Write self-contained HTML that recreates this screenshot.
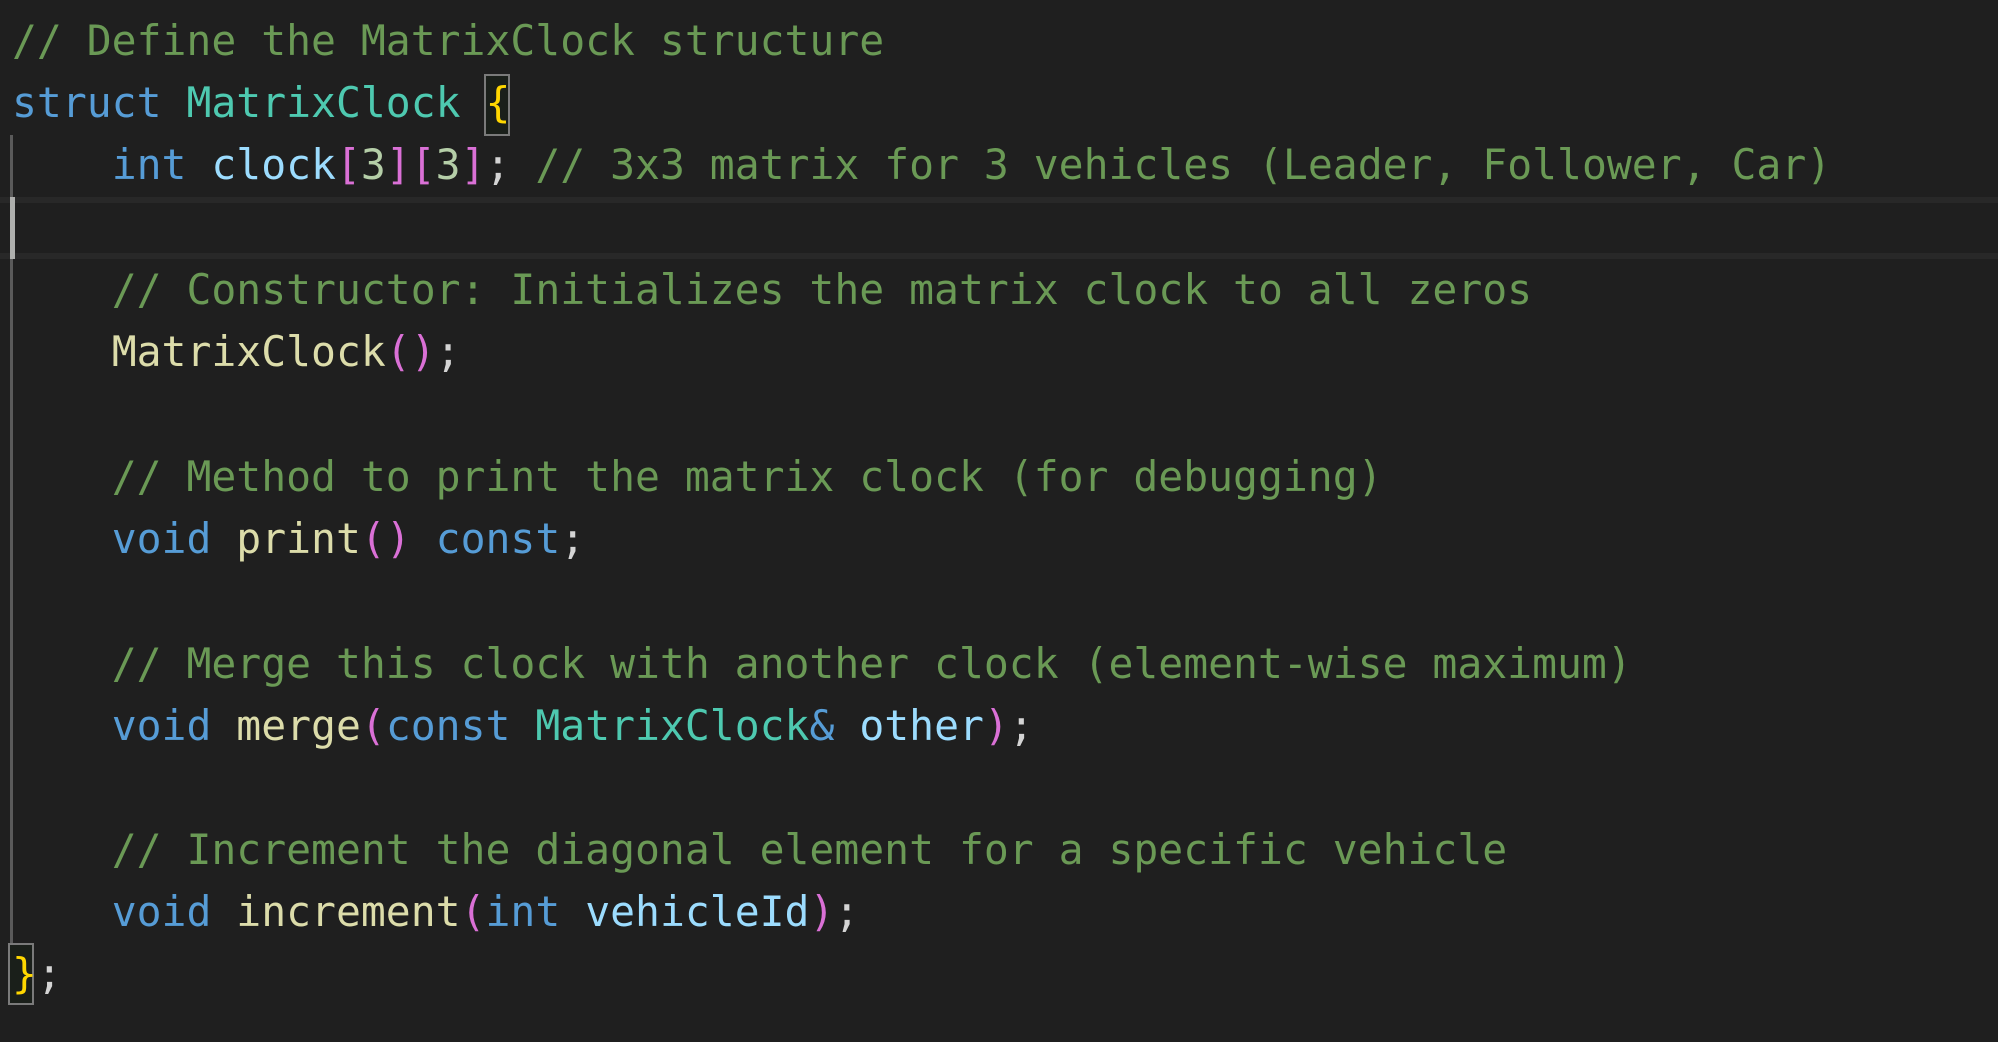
<!DOCTYPE html>
<html><head><meta charset="utf-8"><style>
html,body{margin:0;padding:0;background:#1f1f1f;width:1998px;height:1042px;overflow:hidden}
.l{position:absolute;left:12px;height:62px;line-height:62px;font-family:"DejaVu Sans Mono","Liberation Mono",monospace;font-size:41.4px;white-space:pre;color:#d4d4d4;margin-top:0px}
.c{color:#6a9955}.k{color:#569cd6}.t{color:#4ec9b0}.f{color:#dcdcaa}.v{color:#9cdcfe}.n{color:#b5cea8}.p{color:#da70d6}.b{color:#ffd700}
</style></head><body>
<div style="position:absolute;left:0;top:197px;width:1998px;height:6px;background:#282828"></div>
<div style="position:absolute;left:0;top:253px;width:1998px;height:6px;background:#282828"></div>
<div style="position:absolute;left:10px;top:135px;width:3px;height:808px;background:#5a5a5a"></div>
<div style="position:absolute;left:10px;top:197px;width:5px;height:62px;background:#aeafad"></div>
<div style="position:absolute;left:484px;top:74px;width:22px;height:58px;border:2px solid #7a7a7a;background:#1a1f1a"></div>
<div style="position:absolute;left:8px;top:943px;width:22px;height:58px;border:2px solid #7a7a7a;background:#1a1f1a"></div>
<div class="l" style="top:10px"><span class="c">// Define the MatrixClock structure</span></div>
<div class="l" style="top:72px"><span class="k">struct</span> <span class="t">MatrixClock</span> <span class="b">{</span></div>
<div class="l" style="top:134px">    <span class="k">int</span> <span class="v">clock</span><span class="p">[</span><span class="n">3</span><span class="p">][</span><span class="n">3</span><span class="p">]</span>; <span class="c">// 3x3 matrix for 3 vehicles (Leader, Follower, Car)</span></div>
<div class="l" style="top:259px">    <span class="c">// Constructor: Initializes the matrix clock to all zeros</span></div>
<div class="l" style="top:321px">    <span class="f">MatrixClock</span><span class="p">()</span>;</div>
<div class="l" style="top:446px">    <span class="c">// Method to print the matrix clock (for debugging)</span></div>
<div class="l" style="top:508px">    <span class="k">void</span> <span class="f">print</span><span class="p">()</span> <span class="k">const</span>;</div>
<div class="l" style="top:633px">    <span class="c">// Merge this clock with another clock (element-wise maximum)</span></div>
<div class="l" style="top:695px">    <span class="k">void</span> <span class="f">merge</span><span class="p">(</span><span class="k">const</span> <span class="t">MatrixClock</span><span class="k">&amp;</span> <span class="v">other</span><span class="p">)</span>;</div>
<div class="l" style="top:819px">    <span class="c">// Increment the diagonal element for a specific vehicle</span></div>
<div class="l" style="top:881px">    <span class="k">void</span> <span class="f">increment</span><span class="p">(</span><span class="k">int</span> <span class="v">vehicleId</span><span class="p">)</span>;</div>
<div class="l" style="top:943px"><span class="b">}</span>;</div>
</body></html>
